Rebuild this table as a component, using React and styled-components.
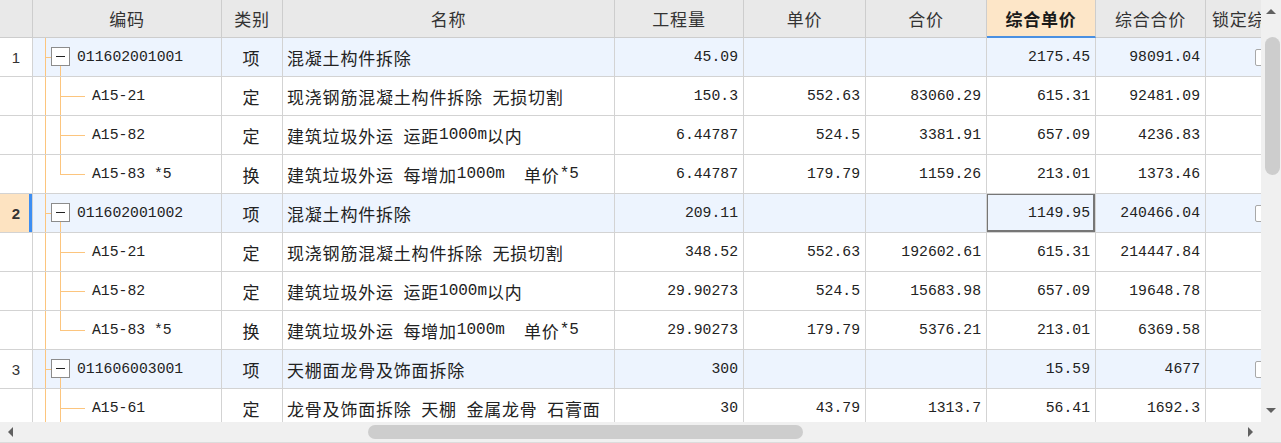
import React from "react";
import styled, { createGlobalStyle } from "styled-components";

const GlobalStyle = createGlobalStyle`
  html, body {
    margin: 0;
    padding: 0;
    background: #fff;
    overflow: hidden;
  }
`;

const COLS = "33px 189px 61px 332px 129px 122px 121px 109px 110px 117px";
const CJK = `"Noto Sans CJK SC", "Noto Sans", sans-serif`;
const MONO = `"Liberation Mono", "DejaVu Sans Mono", monospace`;
const LINE = "#fcc57e";

const Frame = styled.div`
  width: 1281px;
  height: 443px;
  display: flex;
  flex-direction: column;
  background: #fff;
  overflow: hidden;
`;

const Main = styled.div`
  display: flex;
  height: 422px;
`;

const Viewport = styled.div`
  flex: 1;
  overflow: hidden;
`;

const Row = styled.div`
  display: grid;
  grid-template-columns: ${COLS};
  width: max-content;
  height: ${(p) => (p.$header ? "38px" : "39px")};
  background: ${(p) => (p.$top ? "#edf4fe" : "#fff")};
`;

const Cell = styled.div`
  position: relative;
  box-sizing: border-box;
  display: flex;
  align-items: center;
  justify-content: ${(p) => p.$align || "flex-start"};
  padding: 0 5px 0 4px;
  border-right: 1px solid #d3d3d3;
  border-bottom: 1px solid #d3d3d3;
  overflow: hidden;
  white-space: pre;
  color: #222;
  font-family: ${(p) => (p.$mono ? MONO : CJK)};
  font-size: ${(p) => (p.$mono ? "14.75px" : "17px")};
  letter-spacing: ${(p) => (p.$mono ? "0" : "0.8px")};
`;

const HeadCell = styled.div`
  position: relative;
  box-sizing: border-box;
  display: flex;
  align-items: center;
  justify-content: ${(p) => (p.$left ? "flex-start" : "center")};
  padding: ${(p) => (p.$left ? "0 0 0 6px" : "0")};
  background: ${(p) => (p.$active ? "#fde6c8" : "#e9e9e9")};
  border-right: 1px solid #cdcdcd;
  border-bottom: ${(p) => (p.$active ? "2px solid #4a90e2" : "1px solid #cdcdcd")};
  color: ${(p) => (p.$active ? "#1a1a1a" : "#333")};
  font-family: ${CJK};
  font-size: 17px;
  font-weight: ${(p) => (p.$active ? 700 : 400)};
  letter-spacing: 0.8px;
  white-space: nowrap;
  overflow: hidden;
`;

const NumCell = styled.div`
  box-sizing: border-box;
  display: flex;
  align-items: center;
  justify-content: center;
  background: ${(p) => (p.$selected ? "#fde3c1" : "#fff")};
  border-right: 1px solid #d3d3d3;
  border-bottom: 1px solid #d3d3d3;
  box-shadow: ${(p) => (p.$selected ? "inset -3px 0 0 #3d8ef2" : "none")};
  color: #333;
  font-family: "Liberation Sans", Arial, sans-serif;
  font-size: 15px;
  font-weight: ${(p) => (p.$selected ? 700 : 400)};
`;

const Corner = styled.div`
  box-sizing: border-box;
  background: #e9e9e9;
  border-right: 1px solid #cdcdcd;
  border-bottom: 1px solid #cdcdcd;
`;

const SelectBox = styled.span`
  position: absolute;
  left: -1px;
  top: -1px;
  right: 0;
  bottom: 0;
  border: 2px solid #767676;
  pointer-events: none;
`;

const VLine = styled.span`
  position: absolute;
  left: ${(p) => p.$x}px;
  top: ${(p) => p.$from || "0"};
  bottom: ${(p) => p.$to || "-1px"};
  width: 1px;
  background: ${LINE};
`;

const HLine = styled.span`
  position: absolute;
  left: ${(p) => p.$x}px;
  top: 50%;
  width: ${(p) => p.$w}px;
  height: 1px;
  background: ${LINE};
`;

const Toggle = styled.span`
  position: absolute;
  left: 18px;
  top: calc(50% - 10px);
  width: 19px;
  height: 19px;
  box-sizing: border-box;
  border: 1px solid #8c8c8c;
  background: #fff;
  &::after {
    content: "";
    position: absolute;
    left: 4px;
    right: 4px;
    top: 8px;
    height: 1px;
    background: #222;
  }
`;

const CodeText = styled.span`
  padding-left: ${(p) => p.$indent}px;
`;

const Latin = styled.span`
  font-family: ${MONO};
  font-size: 16px;
  letter-spacing: 0;
`;

const Check = styled.span`
  width: 17px;
  height: 17px;
  box-sizing: border-box;
  border: 1px solid #a8a8a8;
  border-radius: 2px;
  background: #fff;
`;

const VScroll = styled.div`
  width: 20px;
  display: flex;
  flex-direction: column;
  align-items: center;
  background: #f0f0f0;
`;

const Arrow = styled.span`
  flex: none;
  width: 0;
  height: 0;
  border-style: solid;
  border-color: transparent;
  ${(p) =>
    p.$dir === "up"
      ? "border-width: 0 5px 5px 5px; border-bottom-color: #606060; margin-top: 9px;"
      : p.$dir === "down"
      ? "border-width: 5px 5px 0 5px; border-top-color: #606060; margin-bottom: 9px;"
      : p.$dir === "left"
      ? "border-width: 5px 5px 5px 0; border-right-color: #606060;"
      : "border-width: 5px 0 5px 5px; border-left-color: #606060;"}
`;

const VTrack = styled.div`
  flex: 1;
  width: 100%;
  padding-top: ${(p) => p.$offset}px;
  box-sizing: border-box;
  display: flex;
  justify-content: center;
`;

const VThumb = styled.div`
  width: 15px;
  height: ${(p) => p.$size}px;
  margin-left: 3px;
  border-radius: 8px;
  background: #cdcdcd;
`;

const Bottom = styled.div`
  display: flex;
  height: 21px;
  background: #f0f0f0;
  border-bottom: 1px solid #dcdcdc;
`;

const HBar = styled.div`
  flex: 1;
  display: flex;
  align-items: center;
  padding: 0 8px;
`;

const HTrack = styled.div`
  flex: 1;
  height: 100%;
  display: flex;
  align-items: center;
  padding-left: ${(p) => p.$offset}px;
`;

const HThumb = styled.div`
  width: ${(p) => p.$size}px;
  height: 14px;
  border-radius: 7px;
  background: #cdcdcd;
`;

const CornerBox = styled.div`
  width: 20px;
  background: #f0f0f0;
`;

const headers = ["编码", "类别", "名称", "工程量", "单价", "合价", "综合单价", "综合合价"];

const rows = [
  { no: "1", top: true, code: "011602001001", kind: "项", name: "混凝土构件拆除", qty: "45.09", price: "", total: "", up: "2175.45", sum: "98091.04" },
  { code: "A15-21", kind: "定", name: "现浇钢筋混凝土构件拆除 无损切割", qty: "150.3", price: "552.63", total: "83060.29", up: "615.31", sum: "92481.09" },
  { code: "A15-82", kind: "定", name: "建筑垃圾外运 运距1000m以内", qty: "6.44787", price: "524.5", total: "3381.91", up: "657.09", sum: "4236.83" },
  { code: "A15-83 *5", last: true, kind: "换", name: "建筑垃圾外运 每增加1000m  单价*5", qty: "6.44787", price: "179.79", total: "1159.26", up: "213.01", sum: "1373.46" },
  { no: "2", top: true, selected: true, code: "011602001002", kind: "项", name: "混凝土构件拆除", qty: "209.11", price: "", total: "", up: "1149.95", sum: "240466.04" },
  { code: "A15-21", kind: "定", name: "现浇钢筋混凝土构件拆除 无损切割", qty: "348.52", price: "552.63", total: "192602.61", up: "615.31", sum: "214447.84" },
  { code: "A15-82", kind: "定", name: "建筑垃圾外运 运距1000m以内", qty: "29.90273", price: "524.5", total: "15683.98", up: "657.09", sum: "19648.78" },
  { code: "A15-83 *5", last: true, kind: "换", name: "建筑垃圾外运 每增加1000m  单价*5", qty: "29.90273", price: "179.79", total: "5376.21", up: "213.01", sum: "6369.58" },
  { no: "3", top: true, code: "011606003001", kind: "项", name: "天棚面龙骨及饰面拆除", qty: "300", price: "", total: "", up: "15.59", sum: "4677" },
  { code: "A15-61", kind: "定", name: "龙骨及饰面拆除 天棚 金属龙骨 石膏面", qty: "30", price: "43.79", total: "1313.7", up: "56.41", sum: "1692.3" },
];

// latin runs (spaces too) get the song-style mono digits, the rest stays CJK
const Mixed = ({ text }) =>
  text.split(/([\x20-\x7e]+)/).map((part, i) =>
    /^[\x20-\x7e]+$/.test(part) ? <Latin key={i}>{part}</Latin> : <span key={i}>{part}</span>
  );

const TreeCode = ({ row }) => (
  <Cell $mono>
    <VLine $x={12} />
    {row.top ? (
      <>
        <HLine $x={12} $w={6} />
        <Toggle />
        <VLine $x={27} $from="calc(50% + 9px)" />
        <CodeText $indent={40}>{row.code}</CodeText>
      </>
    ) : (
      <>
        <VLine $x={27} $to={row.last ? "50%" : "-1px"} />
        <HLine $x={27} $w={25} />
        <CodeText $indent={55}>{row.code}</CodeText>
      </>
    )}
  </Cell>
);

const App = () => {
  return (
    <Frame>
      <GlobalStyle />
      <Main>
        <Viewport>
          <Row $header>
            <Corner />
            {headers.map((h) => (
              <HeadCell key={h} $active={h === "综合单价"}>
                {h}
              </HeadCell>
            ))}
            <HeadCell $left>锁定综合单价</HeadCell>
          </Row>
          {rows.map((r, i) => (
            <Row key={i} $top={r.top}>
              <NumCell $selected={r.selected}>{r.no}</NumCell>
              <TreeCode row={r} />
              <Cell $align="center">{r.kind}</Cell>
              <Cell>
                <Mixed text={r.name} />
              </Cell>
              <Cell $mono $align="flex-end">{r.qty}</Cell>
              <Cell $mono $align="flex-end">{r.price}</Cell>
              <Cell $mono $align="flex-end">{r.total}</Cell>
              <Cell $mono $align="flex-end">
                {r.up}
                {r.selected && <SelectBox />}
              </Cell>
              <Cell $mono $align="flex-end">{r.sum}</Cell>
              <Cell $align="center">{r.top && <Check />}</Cell>
            </Row>
          ))}
        </Viewport>
        <VScroll>
          <Arrow $dir="up" />
          <VTrack $offset={23}>
            <VThumb $size={138} />
          </VTrack>
          <Arrow $dir="down" />
        </VScroll>
      </Main>
      <Bottom>
        <HBar>
          <Arrow $dir="left" />
          <HTrack $offset={355}>
            <HThumb $size={435} />
          </HTrack>
          <Arrow $dir="right" />
        </HBar>
        <CornerBox />
      </Bottom>
    </Frame>
  );
};

export default App;
